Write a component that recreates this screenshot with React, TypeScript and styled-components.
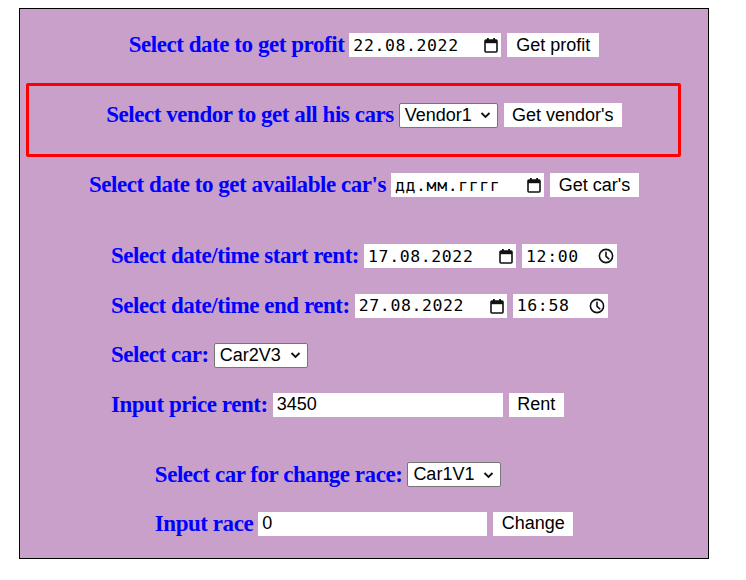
import React from "react";
import styled, { createGlobalStyle } from "styled-components";

const Global = createGlobalStyle`
  html, body { margin: 0; padding: 0; background: #ffffff; }
  body { margin: 8px; font-family: "Liberation Serif", serif; }
`;

const Panel = styled.div`
  position: relative;
  box-sizing: border-box;
  width: 690px;
  margin-left: 11px;
  border: 1px solid #000;
  background: #c8a0c9;
  padding: 21px 0 19px;
  display: flex;
  flex-direction: column;
  align-items: center;
  gap: 40px;
`;

const Section = styled.div<{ $gap?: number; $shift?: number }>`
  display: flex;
  flex-direction: column;
  align-items: flex-start;
  gap: ${(p) => p.$gap ?? 19.5}px;
  margin-top: ${(p) => p.$shift ?? 0}px;
`;

const Row = styled.div`
  height: 30px;
  display: flex;
  align-items: center;
  gap: 6px;
`;

const Label = styled.span`
  font-family: "Liberation Serif", "Times New Roman", serif;
  font-weight: bold;
  font-size: 23px;
  letter-spacing: -0.45px;
  color: #0000ff;
  white-space: nowrap;
  margin-right: -1px;
`;

const Field = styled.div<{ $w: number }>`
  box-sizing: border-box;
  width: ${(p) => p.$w}px;
  height: 24px;
  background: #fff;
  display: flex;
  align-items: center;
  padding: 0 3px 0 4px;
`;

const MonoText = styled.span`
  font-family: "DejaVu Sans Mono", "Liberation Mono", monospace;
  font-size: 16.5px;
  letter-spacing: 0.6px;
  color: #000;
  flex: 1;
  white-space: nowrap;
`;

const SansText = styled.span`
  font-family: "Liberation Sans", Arial, sans-serif;
  font-size: 18px;
  color: #000;
  white-space: nowrap;
`;

const Button = styled.button<{ $w: number }>`
  box-sizing: border-box;
  width: ${(p) => p.$w}px;
  height: 24px;
  border: none;
  background: #fff;
  padding: 0;
  font-family: "Liberation Sans", Arial, sans-serif;
  font-size: 18px;
  color: #000;
  display: flex;
  align-items: center;
  justify-content: center;
`;

const SelectBox = styled.div<{ $w: number }>`
  box-sizing: border-box;
  width: ${(p) => p.$w}px;
  height: 25px;
  background: #fff;
  border: 1px solid #767676;
  border-radius: 2px;
  display: flex;
  align-items: center;
  justify-content: space-between;
  padding: 0 6px 0 5px;
`;

const Annotation = styled.div`
  position: absolute;
  left: 6px;
  top: 74px;
  width: 655px;
  height: 74px;
  box-sizing: border-box;
  border: 3px solid #ff0000;
  border-radius: 2px;
  pointer-events: none;
`;

const CalendarIcon = () => (
  <svg width="14" height="16" viewBox="0 0 14 16">
    <rect x="1" y="3" width="12" height="12" rx="1" fill="none" stroke="#111" strokeWidth="1.6" />
    <rect x="1" y="3" width="12" height="3.2" fill="#111" />
    <rect x="3" y="1" width="1.8" height="3" fill="#111" />
    <rect x="9.2" y="1" width="1.8" height="3" fill="#111" />
  </svg>
);

const ClockIcon = () => (
  <svg width="16" height="16" viewBox="0 0 16 16">
    <circle cx="8" cy="8" r="6.6" fill="none" stroke="#111" strokeWidth="1.6" />
    <path d="M8 4.2V8.3L10.8 10.8" fill="none" stroke="#111" strokeWidth="1.6" strokeLinecap="round" />
  </svg>
);

const Chevron = () => (
  <svg width="11" height="8" viewBox="0 0 11 8">
    <path d="M1.5 2L5.5 6L9.5 2" fill="none" stroke="#111" strokeWidth="1.8" />
  </svg>
);

const DateField = ({ value, w = 152 }: { value: string; w?: number }) => (
  <Field $w={w}>
    <MonoText>{value}</MonoText>
    <CalendarIcon />
  </Field>
);

const TimeField = ({ value }: { value: string }) => (
  <Field $w={95}>
    <MonoText>{value}</MonoText>
    <ClockIcon />
  </Field>
);

const Select = ({ value, w }: { value: string; w: number }) => (
  <SelectBox $w={w}>
    <SansText>{value}</SansText>
    <Chevron />
  </SelectBox>
);

const TextField = ({ value, w }: { value: string; w: number }) => (
  <Field $w={w}>
    <SansText>{value}</SansText>
  </Field>
);

export default function App() {
  return (
    <>
      <Global />
      <Panel>
        <Annotation />
        <Row>
          <Label>Select date to get profit</Label>
          <DateField value="22.08.2022" />
          <Button $w={92}>Get profit</Button>
        </Row>
        <Row>
          <Label>Select vendor to get all his cars</Label>
          <Select value="Vendor1" w={99} />
          <Button $w={118}>Get vendor's</Button>
        </Row>
        <Row>
          <Label>Select date to get available car's</Label>
          <DateField value="дд.мм.гггг" w={153} />
          <Button $w={89}>Get car's</Button>
        </Row>
        <Section $shift={1}>
          <Row>
            <Label>Select date/time start rent:</Label>
            <DateField value="17.08.2022" />
            <TimeField value="12:00" />
          </Row>
          <Row>
            <Label>Select date/time end rent:</Label>
            <DateField value="27.08.2022" />
            <TimeField value="16:58" />
          </Row>
          <Row>
            <Label>Select car:</Label>
            <Select value="Car2V3" w={94} />
          </Row>
          <Row>
            <Label>Input price rent:</Label>
            <TextField value="3450" w={230} />
            <Button $w={55}>Rent</Button>
          </Row>
        </Section>
        <Section $gap={19}>
          <Row>
            <Label>Select car for change race:</Label>
            <Select value="Car1V1" w={94} />
          </Row>
          <Row>
            <Label>Input race</Label>
            <TextField value="0" w={229} />
            <Button $w={80}>Change</Button>
          </Row>
        </Section>
      </Panel>
    </>
  );
}
